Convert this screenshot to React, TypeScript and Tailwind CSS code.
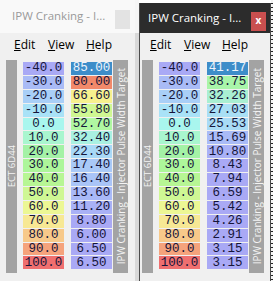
import React from 'react'

type Cell = { text: string; bg: string; fg?: string }

const ect: Cell[] = [
  { text: '-40.0', bg: 'bg-[#a9a9f5]' },
  { text: '-30.0', bg: 'bg-[#a9bbf6]' },
  { text: '-20.0', bg: 'bg-[#a9cff7]' },
  { text: '-10.0', bg: 'bg-[#a9e2f7]' },
  { text: '0.0', bg: 'bg-[#a9f6ee]' },
  { text: '10.0', bg: 'bg-[#a9f6cf]' },
  { text: '20.0', bg: 'bg-[#a4f2a6]' },
  { text: '30.0', bg: 'bg-[#adf69a]' },
  { text: '40.0', bg: 'bg-[#b7f694]' },
  { text: '50.0', bg: 'bg-[#cff794]' },
  { text: '60.0', bg: 'bg-[#ecf794]' },
  { text: '70.0', bg: 'bg-[#f7e894]' },
  { text: '80.0', bg: 'bg-[#f7c98a]' },
  { text: '90.0', bg: 'bg-[#f5a37c]' },
  { text: '100.0', bg: 'bg-[#ef6f6f]' },
]

const targetA: Cell[] = [
  { text: '85.00', bg: 'bg-[#3d8dc9]', fg: 'text-[#eef4fb]' },
  { text: '80.00', bg: 'bg-[#f2896a]' },
  { text: '66.60', bg: 'bg-[#f7f08e]' },
  { text: '55.80', bg: 'bg-[#cff792]' },
  { text: '52.70', bg: 'bg-[#b0f7a2]' },
  { text: '32.40', bg: 'bg-[#a9f1e2]' },
  { text: '22.30', bg: 'bg-[#a9d9f7]' },
  { text: '17.40', bg: 'bg-[#a9c9f7]' },
  { text: '16.40', bg: 'bg-[#a9c4f7]' },
  { text: '13.60', bg: 'bg-[#a9b9f7]' },
  { text: '11.20', bg: 'bg-[#a9b1f6]' },
  { text: '8.80', bg: 'bg-[#a9a9f5]' },
  { text: '6.00', bg: 'bg-[#a9a9f5]' },
  { text: '6.50', bg: 'bg-[#a9a9f5]' },
  { text: '6.50', bg: 'bg-[#a9a9f5]' },
]

const targetB: Cell[] = [
  { text: '41.17', bg: 'bg-[#3d8dc9]', fg: 'text-[#eef4fb]' },
  { text: '38.75', bg: 'bg-[#a9f5a9]' },
  { text: '32.26', bg: 'bg-[#a9efd2]' },
  { text: '27.03', bg: 'bg-[#a9dff5]' },
  { text: '25.53', bg: 'bg-[#a9dbf6]' },
  { text: '15.69', bg: 'bg-[#a9bbf7]' },
  { text: '10.80', bg: 'bg-[#a9b1f6]' },
  { text: '8.43', bg: 'bg-[#a9a9f5]' },
  { text: '7.94', bg: 'bg-[#a9a9f5]' },
  { text: '6.59', bg: 'bg-[#a9a9f5]' },
  { text: '5.42', bg: 'bg-[#a9a9f5]' },
  { text: '4.26', bg: 'bg-[#a9a9f5]' },
  { text: '2.91', bg: 'bg-[#a9a9f5]' },
  { text: '3.15', bg: 'bg-[#a9a9f5]' },
  { text: '3.15', bg: 'bg-[#a9a9f5]' },
]

const ui = "font-['Open_Sans','Liberation_Sans',sans-serif]"

function Column({ cells }: { cells: Cell[] }) {
  return (
    <div className="mt-[2px] flex w-[41px] flex-col gap-px">
      {cells.map((c, i) => (
        <div
          key={i}
          className={`flex h-[12.9px] items-center justify-center font-['Liberation_Mono',monospace] text-[12.5px] leading-none ${c.bg} ${c.fg ?? 'text-[#15153a]'}`}
        >
          {c.text}
        </div>
      ))}
    </div>
  )
}

function Menu({ first }: { first: string }) {
  return (
    <div className={`flex h-[23px] items-center bg-[#f0f0f0] text-[12px] text-black ${ui} ${first}`}>
      <span className="w-[34px]"><u>E</u>dit</span>
      <span className="w-[38px]"><u>V</u>iew</span>
      <span><u>H</u>elp</span>
    </div>
  )
}

function Body({ values, lead }: { values: Cell[]; lead: string }) {
  return (
    <div className={`flex flex-1 items-start bg-[#f0f0f0] pt-[4px] ${lead}`}>
      <div className="flex h-[213px] w-[11px] items-center justify-center overflow-hidden bg-[#a3a3a3]">
        <span className={`rotate-180 whitespace-nowrap text-[9.5px] leading-none text-[#f4f4f4] [writing-mode:vertical-rl] ${ui}`}>
          ECT 6D44
        </span>
      </div>
      <div className="ml-[6px]">
        <Column cells={ect} />
      </div>
      <div className="ml-[7px]">
        <Column cells={values} />
      </div>
      <div className="ml-px flex h-[213px] w-[15px] items-center justify-center overflow-hidden bg-[#a3a3a3]">
        <span className={`rotate-180 whitespace-nowrap text-[10px] leading-none text-[#f4f4f4] [writing-mode:vertical-rl] ${ui}`}>
          IPW Cranking - Injector Pulse Width Target
        </span>
      </div>
    </div>
  )
}

export default function App() {
  return (
    <div className="flex h-[281px] w-[273px] overflow-hidden bg-white">
      {/* inactive window */}
      <div className="flex w-[135px] flex-col">
        <div className={`flex h-[33px] items-center justify-between bg-[#f9f9f9] pl-[12px] pr-[5px] ${ui}`}>
          <span className="whitespace-nowrap pb-px text-[11.5px] text-[#9a9a9a]">IPW Cranking - I...</span>
          <span className="mt-[6px] h-[19px] w-[15px] bg-[#e3e3e3]" />
        </div>
        <Menu first="pl-[14px]" />
        <Body values={targetA} lead="pl-[6px]" />
      </div>

      <div className="flex w-[4px] flex-col">
        <div className="h-[33px] bg-[#f6f6f6]" />
        <div className="flex-1 bg-[#d8d8d8]" />
      </div>

      {/* active window */}
      <div className="mt-[3px] flex w-[132px] flex-col border-x border-[#4b4b4b]">
        <div className={`flex h-[30px] items-center justify-between bg-[#2c2c2c] pl-[8px] pr-[4px] ${ui}`}>
          <span className="whitespace-nowrap pb-px text-[11.5px] text-white">IPW Cranking - I...</span>
          <span className="mt-[6px] flex h-[19px] w-[15px] items-center justify-center bg-[#c94f4f] pb-[2px] text-[10px] font-bold leading-none text-white">
            x
          </span>
        </div>
        <Menu first="pl-[10px]" />
        <Body values={targetB} lead="pl-[2px]" />
      </div>

      <div className="w-[2px] bg-[repeating-linear-gradient(to_bottom,#f4f4f4_0px,#f4f4f4_3px,#222_3px,#222_4px)]" />
    </div>
  )
}
